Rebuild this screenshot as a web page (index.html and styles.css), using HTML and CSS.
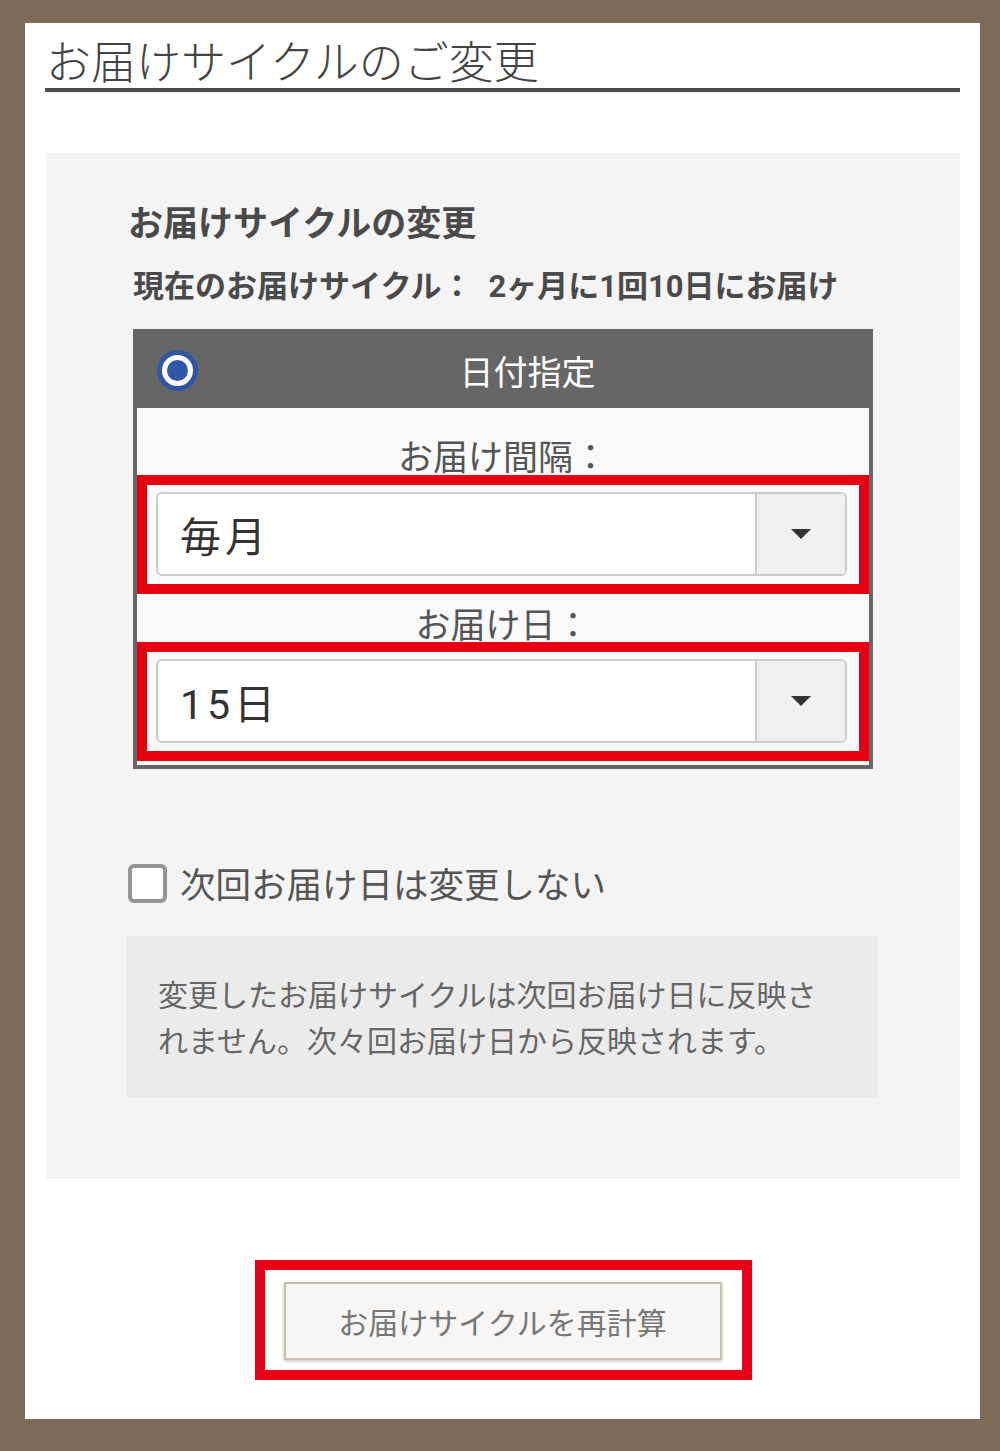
FILE: index.html
```html
<!DOCTYPE html>
<html lang="ja">
<head>
<meta charset="utf-8">
<title>お届けサイクルのご変更</title>
<link rel="stylesheet" href="styles.css">
</head>
<body>
<div class="page">
  <h1 class="title">お届けサイクルのご変更</h1>
  <section class="panel">
    <h2 class="heading">お届けサイクルの変更</h2>
    <p class="current">現在のお届けサイクル：<span class="current-value">2ヶ月に1回10日にお届け</span></p>
    <div class="box">
      <div class="box-head">
        <span class="radio"></span>
        <span class="box-title">日付指定</span>
      </div>
      <div class="box-body">
        <div class="field-label">お届け間隔：</div>
        <div class="hl">
          <div class="select">
            <span class="select-value">毎月</span>
            <span class="select-btn"><span class="caret"></span></span>
          </div>
        </div>
        <div class="field-label second">お届け日：</div>
        <div class="hl">
          <div class="select">
            <span class="select-value">15日</span>
            <span class="select-btn"><span class="caret"></span></span>
          </div>
        </div>
      </div>
    </div>
    <label class="check-row">
      <span class="checkbox"></span>
      <span class="check-label">次回お届け日は変更しない</span>
    </label>
    <div class="note">変更したお届けサイクルは次回お届け日に反映されません。次々回お届け日から反映されます。</div>
  </section>
  <div class="actions">
    <div class="hl-btn">
      <button class="btn" type="button">お届けサイクルを再計算</button>
    </div>
  </div>
</div>
</body>
</html>
```
FILE: styles.css
```css
html, body {
  margin: 0;
}
body {
  background: #7a6a56;
  padding: 23px 20px 32px 25px;
  font-family: "Noto Sans CJK JP", "Noto Sans", sans-serif;
  color: #4a4a4a;
}
.page {
  background: #fff;
  height: 1396px;
  box-sizing: border-box;
  padding: 0 20px 0 21px;
  display: flow-root;
}
.title {
  margin: 0 0 0 -1px;
  padding: 9px 0 0 1px;
  font-size: 45px;
  line-height: 56px;
  font-weight: 300;
  color: #444;
  border-bottom: 4px solid #4d4d4d;
}
.panel {
  margin-top: 61px;
  background: #f4f4f4;
  padding: 45px 82px 81px;
}
.heading {
  margin: 0;
  font-size: 35px;
  line-height: 46px;
  font-weight: 700;
  color: #4a4a4a;
}
.current {
  margin: 20px 0 0 5px;
  height: 40px;
  font-size: 31px;
  line-height: 40px;
  font-weight: 700;
  color: #4a4a4a;
  white-space: nowrap;
}
.current-value {
  margin-left: 16px;
  font-family: Roboto, "Noto Sans CJK JP", sans-serif;
  line-height: 1;
}
.box {
  margin: 25px 0 0 5px;
  width: 740px;
  box-sizing: border-box;
  border: 4px solid #666;
}
.box-head {
  height: 75px;
  background: #666;
  display: flex;
  align-items: center;
  padding-left: 20px;
}
.radio {
  width: 41px;
  height: 41px;
  border-radius: 50%;
  background: #3057a7;
  display: flex;
  align-items: center;
  justify-content: center;
  flex: none;
}
.radio::after {
  content: "";
  width: 21px;
  height: 21px;
  border-radius: 50%;
  background: #3057a7;
  border: 5px solid #fff;
}
.box-title {
  flex: 1;
  text-align: center;
  color: #fff;
  font-size: 34px;
  line-height: 44px;
  padding-right: 12px;
}
.box-body {
  background: #f9f9f9;
  padding-bottom: 4px;
}
.field-label {
  text-align: center;
  font-size: 35px;
  line-height: 40px;
  padding-top: 27px;
  color: #555;
}
.field-label.second {
  line-height: 38px;
  padding-top: 10px;
}
.hl {
  border: 10px solid #e60012;
  padding: 7px 12px 8px 9px;
}
.select {
  height: 84px;
  box-sizing: border-box;
  border: 2px solid #ccc;
  border-radius: 6px;
  background: #fff;
  display: flex;
  overflow: hidden;
}
.select-value {
  flex: 1;
  display: flex;
  align-items: center;
  padding-left: 22px;
  font-family: Roboto, "Noto Sans CJK JP", sans-serif;
  font-size: 41px;
  color: #333;
  letter-spacing: 4px;
}
.select-btn {
  width: 88px;
  background: #f0f0f0;
  border-left: 2px solid #ccc;
  display: flex;
  align-items: center;
  justify-content: center;
}
.caret {
  width: 0;
  height: 0;
  border-left: 10px solid transparent;
  border-right: 10px solid transparent;
  border-top: 10px solid #333;
}
.check-row {
  margin-top: 94px;
  display: flex;
  align-items: center;
  gap: 13px;
  height: 40px;
}
.checkbox {
  width: 39px;
  height: 39px;
  box-sizing: border-box;
  border: 4px solid #949494;
  border-radius: 6px;
  background: #fff;
}
.check-label {
  font-size: 35.5px;
  line-height: 40px;
  color: #555;
}
.note {
  margin: 33px 0 0 -1px;
  width: 751px;
  box-sizing: border-box;
  background: #ebebeb;
  padding: 34px 50px 36px 31px;
  font-size: 30px;
  line-height: 46px;
  color: #666;
}
.actions {
  margin-top: 81px;
  display: flex;
  justify-content: center;
}
.hl-btn {
  border: 10px solid #e60012;
  padding: 12px 20px 10px 19px;
}
.btn {
  display: block;
  width: 438px;
  height: 78px;
  box-sizing: border-box;
  border: 2px solid #c9bfae;
  background: #f7f6f4;
  box-shadow: 0 1px 3px rgba(0, 0, 0, 0.25);
  font-family: "Noto Sans CJK JP", "Noto Sans", sans-serif;
  font-size: 30px;
  color: #777;
  padding: 0;
}
```
